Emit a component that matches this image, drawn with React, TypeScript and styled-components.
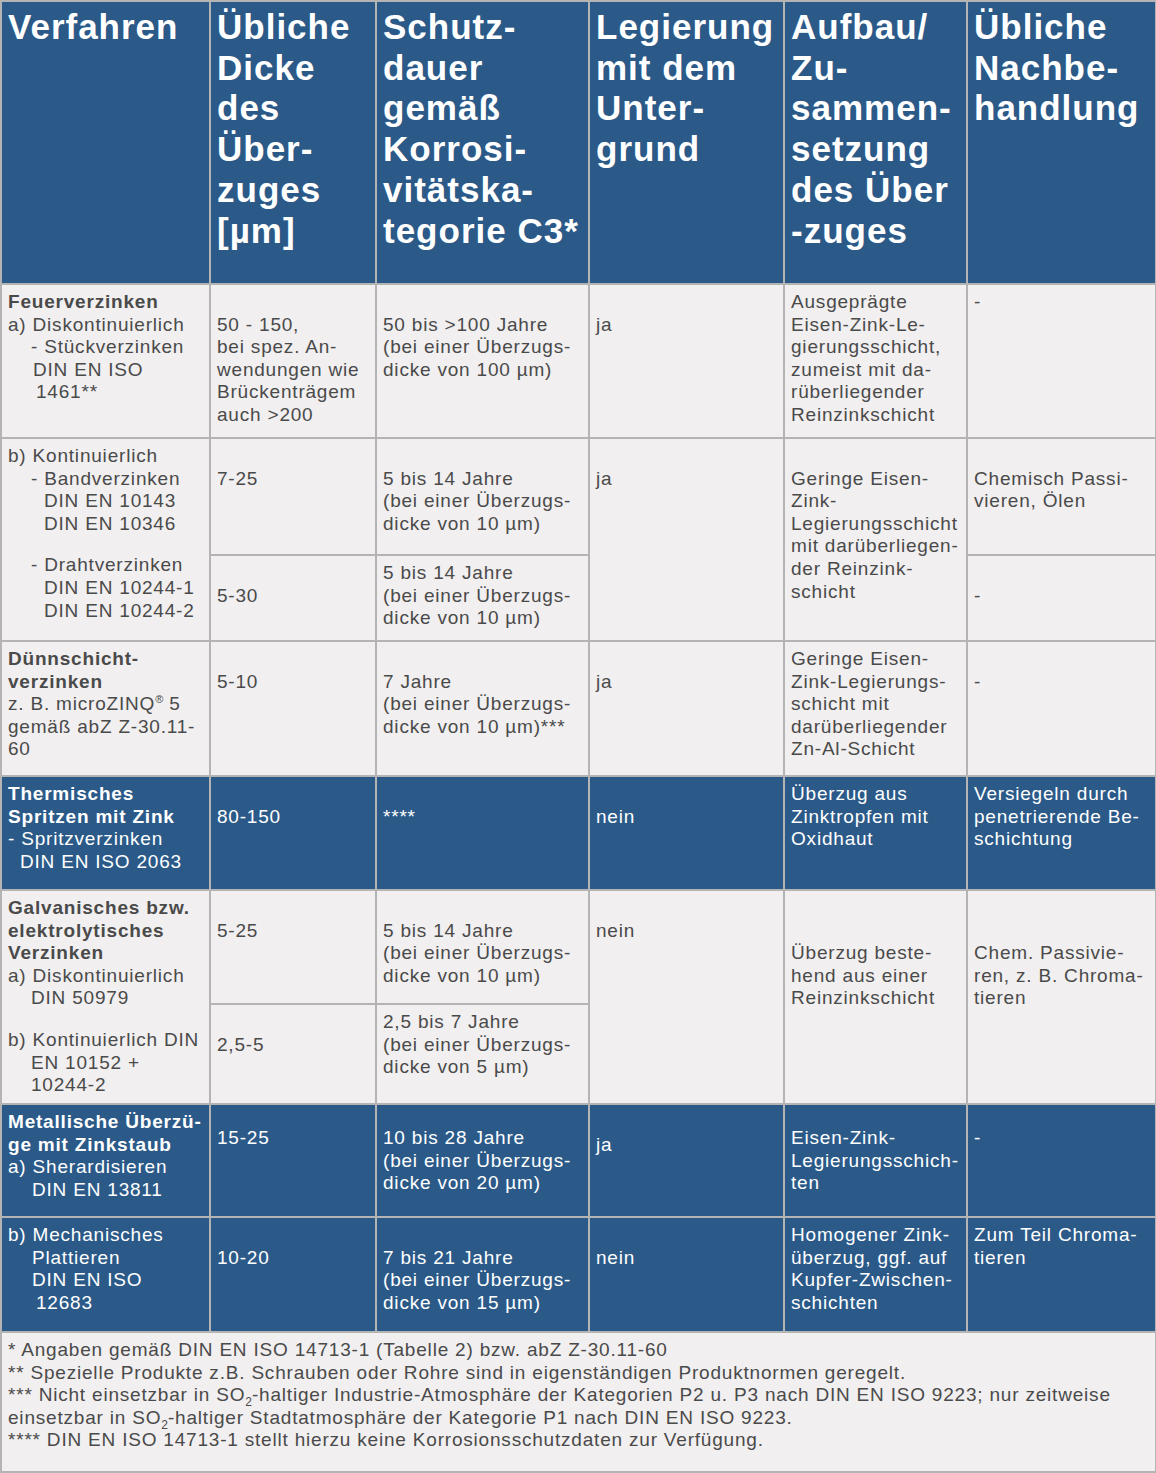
import styled, { createGlobalStyle } from "styled-components";

const BLUE = "#2b5a89";
const LIGHT = "#f1eff0";
const BORDER = "#b4b4b4";
const INK = "#4a4a4a";
const LINE = 22.6;

const GlobalStyle = createGlobalStyle`
  html, body {
    margin: 0;
    padding: 0;
    background: ${LIGHT};
  }
  body {
    font-family: "Liberation Sans", Arial, sans-serif;
  }
`;

const Table = styled.table`
  width: 1155px;
  border-collapse: collapse;
  table-layout: fixed;
  border: 2px solid ${BORDER};
  font-family: "Liberation Sans", Arial, sans-serif;
`;

const Row = styled.tr<{ $h: number }>`
  height: ${(p) => p.$h}px;
`;

const HeadCell = styled.th`
  background: ${BLUE};
  color: #fff;
  border: 2px solid ${BORDER};
  text-align: left;
  vertical-align: top;
  padding: 5px 2px 0 6px;
  font-size: 35px;
  font-weight: 700;
  line-height: 40.7px;
  letter-spacing: 1px;
  white-space: nowrap;
`;

const Cell = styled.td<{ $dark?: boolean; $offset?: number }>`
  background: ${(p) => (p.$dark ? BLUE : LIGHT)};
  color: ${(p) => (p.$dark ? "#fff" : INK)};
  border: 2px solid ${BORDER};
  vertical-align: top;
  padding: ${(p) => 6 + (p.$offset ?? 0)}px 2px 0 6px;
  font-size: 19px;
  line-height: ${LINE}px;
  letter-spacing: 0.8px;
  white-space: nowrap;
`;

const Line = styled.div<{ $indent?: number; $bold?: boolean; $gap?: number }>`
  padding-left: ${(p) => p.$indent ?? 0}px;
  margin-top: ${(p) => p.$gap ?? 0}px;
  font-weight: ${(p) => (p.$bold ? 700 : 400)};
`;

const Sup = styled.sup`
  font-size: 11px;
  line-height: 0;
  letter-spacing: 0;
`;

const Sub = styled.sub`
  font-size: 12px;
  line-height: 0;
  letter-spacing: 0;
`;

function Lines({ items }: { items: string[] }) {
  return (
    <>
      {items.map((t, i) => (
        <Line key={i}>{t}</Line>
      ))}
    </>
  );
}

const ONE = LINE;

export default function App() {
  return (
    <>
      <GlobalStyle />
      <Table>
        <colgroup>
          <col style={{ width: 209 }} />
          <col style={{ width: 166 }} />
          <col style={{ width: 213 }} />
          <col style={{ width: 195 }} />
          <col style={{ width: 183 }} />
          <col style={{ width: 189 }} />
        </colgroup>
        <thead>
          <Row $h={283}>
            <HeadCell>Verfahren</HeadCell>
            <HeadCell>
              Übliche<br />Dicke<br />des<br />Über-<br />zuges<br />[µm]
            </HeadCell>
            <HeadCell>
              Schutz-<br />dauer<br />gemäß<br />Korrosi-<br />vitätska-<br />tegorie C3*
            </HeadCell>
            <HeadCell>
              Legierung<br />mit dem<br />Unter-<br />grund
            </HeadCell>
            <HeadCell>
              Aufbau/<br />Zu-<br />sammen-<br />setzung<br />des Über<br />-zuges
            </HeadCell>
            <HeadCell>
              Übliche<br />Nachbe-<br />handlung
            </HeadCell>
          </Row>
        </thead>
        <tbody>
          {/* Feuerverzinken */}
          <Row $h={154}>
            <Cell>
              <Line $bold>Feuerverzinken</Line>
              <Line>a) Diskontinuierlich</Line>
              <Line $indent={23}>- Stückverzinken</Line>
              <Line $indent={25}>DIN EN ISO</Line>
              <Line $indent={28}>1461**</Line>
            </Cell>
            <Cell $offset={ONE}>
              <Lines items={["50 - 150,", "bei spez. An-", "wendungen wie", "Brückenträgem", "auch >200"]} />
            </Cell>
            <Cell $offset={ONE}>
              <Lines items={["50 bis >100 Jahre", "(bei einer Überzugs-", "dicke von 100 µm)"]} />
            </Cell>
            <Cell $offset={ONE}>ja</Cell>
            <Cell>
              <Lines
                items={[
                  "Ausgeprägte",
                  "Eisen-Zink-Le-",
                  "gierungsschicht,",
                  "zumeist mit da-",
                  "rüberliegender",
                  "Reinzinkschicht",
                ]}
              />
            </Cell>
            <Cell>-</Cell>
          </Row>

          <Row $h={117}>
            <Cell rowSpan={2}>
              <Line>b) Kontinuierlich</Line>
              <Line $indent={23}>- Bandverzinken</Line>
              <Line $indent={36}>DIN EN 10143</Line>
              <Line $indent={36}>DIN EN 10346</Line>
              <Line $indent={23} $gap={19}>
                - Drahtverzinken
              </Line>
              <Line $indent={36}>DIN EN 10244-1</Line>
              <Line $indent={36}>DIN EN 10244-2</Line>
            </Cell>
            <Cell $offset={ONE}>7-25</Cell>
            <Cell $offset={ONE}>
              <Lines items={["5 bis 14 Jahre", "(bei einer Überzugs-", "dicke von 10 µm)"]} />
            </Cell>
            <Cell rowSpan={2} $offset={ONE}>
              ja
            </Cell>
            <Cell rowSpan={2} $offset={ONE}>
              <Lines
                items={[
                  "Geringe Eisen-",
                  "Zink-",
                  "Legierungsschicht",
                  "mit darüberliegen-",
                  "der Reinzink-",
                  "schicht",
                ]}
              />
            </Cell>
            <Cell $offset={ONE}>
              <Lines items={["Chemisch Passi-", "vieren, Ölen"]} />
            </Cell>
          </Row>
          <Row $h={86}>
            <Cell $offset={ONE}>5-30</Cell>
            <Cell>
              <Lines items={["5 bis 14 Jahre", "(bei einer Überzugs-", "dicke von 10 µm)"]} />
            </Cell>
            <Cell $offset={ONE}>-</Cell>
          </Row>

          {/* Dünnschichtverzinken */}
          <Row $h={135}>
            <Cell>
              <Line $bold>Dünnschicht-</Line>
              <Line $bold>verzinken</Line>
              <Line>
                z. B. microZINQ<Sup>®</Sup> 5
              </Line>
              <Line>gemäß abZ Z-30.11-</Line>
              <Line>60</Line>
            </Cell>
            <Cell $offset={ONE}>5-10</Cell>
            <Cell $offset={ONE}>
              <Lines items={["7 Jahre", "(bei einer Überzugs-", "dicke von 10 µm)***"]} />
            </Cell>
            <Cell $offset={ONE}>ja</Cell>
            <Cell>
              <Lines
                items={[
                  "Geringe Eisen-",
                  "Zink-Legierungs-",
                  "schicht mit",
                  "darüberliegender",
                  "Zn-Al-Schicht",
                ]}
              />
            </Cell>
            <Cell $offset={ONE}>-</Cell>
          </Row>

          {/* Thermisches Spritzen */}
          <Row $h={114}>
            <Cell $dark>
              <Line $bold>Thermisches</Line>
              <Line $bold>Spritzen mit Zink</Line>
              <Line>- Spritzverzinken</Line>
              <Line $indent={12}>DIN EN ISO 2063</Line>
            </Cell>
            <Cell $dark $offset={ONE}>
              80-150
            </Cell>
            <Cell $dark $offset={ONE}>
              ****
            </Cell>
            <Cell $dark $offset={ONE}>
              nein
            </Cell>
            <Cell $dark>
              <Lines items={["Überzug aus", "Zinktropfen mit", "Oxidhaut"]} />
            </Cell>
            <Cell $dark>
              <Lines items={["Versiegeln durch", "penetrierende Be-", "schichtung"]} />
            </Cell>
          </Row>

          {/* Galvanisches Verzinken */}
          <Row $h={114}>
            <Cell rowSpan={2}>
              <Line $bold>Galvanisches bzw.</Line>
              <Line $bold>elektrolytisches</Line>
              <Line $bold>Verzinken</Line>
              <Line>a) Diskontinuierlich</Line>
              <Line $indent={23}>DIN 50979</Line>
              <Line $gap={19}>b) Kontinuierlich DIN</Line>
              <Line $indent={23}>EN 10152 +</Line>
              <Line $indent={23}>10244-2</Line>
            </Cell>
            <Cell $offset={ONE}>5-25</Cell>
            <Cell $offset={ONE}>
              <Lines items={["5 bis 14 Jahre", "(bei einer Überzugs-", "dicke von 10 µm)"]} />
            </Cell>
            <Cell rowSpan={2} $offset={ONE}>
              nein
            </Cell>
            <Cell rowSpan={2} $offset={ONE * 2}>
              <Lines items={["Überzug beste-", "hend aus einer", "Reinzinkschicht"]} />
            </Cell>
            <Cell rowSpan={2} $offset={ONE * 2}>
              <Lines items={["Chem. Passivie-", "ren, z. B. Chroma-", "tieren"]} />
            </Cell>
          </Row>
          <Row $h={100}>
            <Cell $offset={ONE}>2,5-5</Cell>
            <Cell>
              <Lines items={["2,5 bis 7 Jahre", "(bei einer Überzugs-", "dicke von 5 µm)"]} />
            </Cell>
          </Row>

          {/* Metallische Überzüge */}
          <Row $h={113}>
            <Cell $dark>
              <Line $bold>Metallische Überzü-</Line>
              <Line $bold>ge mit Zinkstaub</Line>
              <Line>a) Sherardisieren</Line>
              <Line $indent={24}>DIN EN 13811</Line>
            </Cell>
            <Cell $dark $offset={16}>
              15-25
            </Cell>
            <Cell $dark $offset={16}>
              <Lines items={["10 bis 28 Jahre", "(bei einer Überzugs-", "dicke von 20 µm)"]} />
            </Cell>
            <Cell $dark $offset={ONE}>
              ja
            </Cell>
            <Cell $dark $offset={16}>
              <Lines items={["Eisen-Zink-", "Legierungsschich-", "ten"]} />
            </Cell>
            <Cell $dark $offset={16}>
              -
            </Cell>
          </Row>
          <Row $h={115}>
            <Cell $dark>
              <Line>b) Mechanisches</Line>
              <Line $indent={24}>Plattieren</Line>
              <Line $indent={24}>DIN EN ISO</Line>
              <Line $indent={28}>12683</Line>
            </Cell>
            <Cell $dark $offset={ONE}>
              10-20
            </Cell>
            <Cell $dark $offset={ONE}>
              <Lines items={["7 bis 21 Jahre", "(bei einer Überzugs-", "dicke von 15 µm)"]} />
            </Cell>
            <Cell $dark $offset={ONE}>
              nein
            </Cell>
            <Cell $dark>
              <Lines
                items={["Homogener Zink-", "überzug, ggf. auf", "Kupfer-Zwischen-", "schichten"]}
              />
            </Cell>
            <Cell $dark>
              <Lines items={["Zum Teil Chroma-", "tieren"]} />
            </Cell>
          </Row>

          {/* Fußnoten */}
          <Row $h={140}>
            <Cell colSpan={6}>
              <Line>* Angaben gemäß DIN EN ISO 14713-1 (Tabelle 2) bzw. abZ Z-30.11-60</Line>
              <Line>
                ** Spezielle Produkte z.B. Schrauben oder Rohre sind in eigenständigen Produktnormen
                geregelt.
              </Line>
              <Line>
                *** Nicht einsetzbar in SO<Sub>2</Sub>-haltiger Industrie-Atmosphäre der Kategorien P2
                u. P3 nach DIN EN ISO 9223; nur zeitweise
              </Line>
              <Line>
                einsetzbar in SO<Sub>2</Sub>-haltiger Stadtatmosphäre der Kategorie P1 nach DIN EN ISO
                9223.
              </Line>
              <Line>**** DIN EN ISO 14713-1 stellt hierzu keine Korrosionsschutzdaten zur Verfügung.</Line>
            </Cell>
          </Row>
        </tbody>
      </Table>
    </>
  );
}
